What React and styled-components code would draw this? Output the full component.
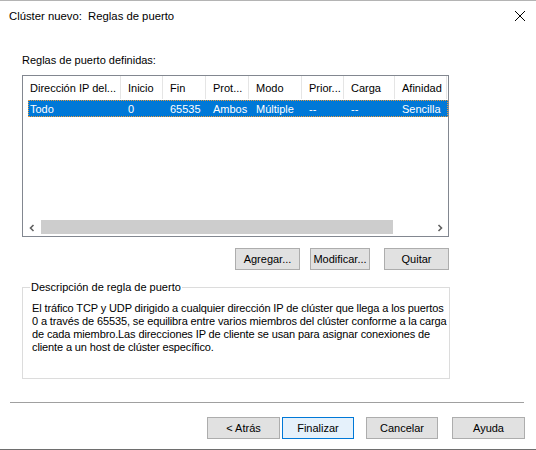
import React from "react";
import styled, { createGlobalStyle } from "styled-components";

const GlobalStyle = createGlobalStyle`
  html, body {
    margin: 0;
    padding: 0;
    background: #ffffff;
  }
  body {
    font-family: "Liberation Sans", Arial, sans-serif;
    font-size: 11px;
    color: #000000;
  }
`;

const columns = [
  { title: "Dirección IP del...", width: 98 },
  { title: "Inicio", width: 42 },
  { title: "Fin", width: 43 },
  { title: "Prot...", width: 43 },
  { title: "Modo", width: 53 },
  { title: "Prior...", width: 42 },
  { title: "Carga", width: 51 },
  { title: "Afinidad", width: 52 },
];

const rows = [["Todo", "0", "65535", "Ambos", "Múltiple", "--", "--", "Sencilla"]];

const gridCols = columns.map((c) => c.width + "px").join(" ");

const description = [
  "El tráfico TCP y UDP dirigido a cualquier dirección IP de clúster que llega a los puertos",
  "0 a través de 65535, se equilibra entre varios miembros del clúster conforme a la carga",
  "de cada miembro.Las direcciones IP de cliente se usan para asignar conexiones de",
  "cliente a un host de clúster específico.",
];

const Window = styled.div`
  width: 536px;
  height: 450px;
  box-sizing: border-box;
  border-top: 1px solid #b4b4b4;
  border-bottom: 1px solid #6e6e6e;
  display: flex;
  flex-direction: column;
  background: #ffffff;
  overflow: hidden;
`;

const TitleBar = styled.div`
  height: 29px;
  display: flex;
  align-items: center;
  justify-content: space-between;
  padding: 0 10px 0 9px;
  font-size: 11.3px;
  white-space: pre;
`;

const CloseButton = styled.div`
  width: 12px;
  height: 12px;
  display: flex;
  align-items: center;
  justify-content: center;
`;

const Body = styled.div`
  padding: 24px 87px 0 22px;
  display: flex;
  flex-direction: column;
`;

const Label = styled.div`
  line-height: 13px;
  margin-bottom: 8px;
`;

const ListBox = styled.div`
  height: 162px;
  box-sizing: border-box;
  border: 1px solid #828790;
  display: flex;
  flex-direction: column;
`;

const HeaderRow = styled.div`
  display: grid;
  grid-template-columns: ${gridCols};
  height: 23px;
`;

const HeaderCell = styled.div`
  display: flex;
  align-items: center;
  padding-left: 7px;
  border-right: 1px solid #e5e5e5;
  white-space: nowrap;
  overflow: hidden;
`;

const DataRow = styled.div`
  display: grid;
  grid-template-columns: ${gridCols};
  height: 17px;
  margin-top: 1px;
  background: ${(p) => (p.$selected ? "#0078d7" : "transparent")};
  color: ${(p) => (p.$selected ? "#ffffff" : "#000000")};
  position: relative;
  clip-path: inset(0 0 0 5px);
  &::after {
    content: "";
    position: absolute;
    inset: 0 0 0 5px;
    border: 1px dotted ${(p) => (p.$selected ? "#e89a3c" : "transparent")};
  }
`;

const DataCell = styled.div`
  display: flex;
  align-items: center;
  padding-left: 7px;
  white-space: nowrap;
  overflow: hidden;
`;

const ListFill = styled.div`
  flex: 1;
`;

const ScrollBar = styled.div`
  height: 17px;
  display: flex;
  align-items: flex-start;
  background: #ffffff;
`;

const ScrollArrow = styled.div`
  width: 17px;
  height: 17px;
  display: flex;
  align-items: center;
  justify-content: center;
`;

const ScrollTrack = styled.div`
  flex: 1;
  height: 17px;
  padding-top: 1px;
  box-sizing: border-box;
  padding-right: 38px;
`;

const Thumb = styled.div`
  height: 14px;
  background: #cdcdcd;
  margin-left: 1px;
`;

const ButtonRow = styled.div`
  display: flex;
  justify-content: flex-end;
  gap: ${(p) => p.$gap ?? 10}px;
  margin-top: ${(p) => p.$top ?? 0}px;
`;

const Button = styled.button`
  width: ${(p) => p.$width || 65}px;
  height: 22px;
  box-sizing: border-box;
  margin: 0;
  padding: 0;
  font-family: "Liberation Sans", Arial, sans-serif;
  font-size: 11px;
  color: #000000;
  background: ${(p) => (p.$default ? "#e5f1fb" : "#e1e1e1")};
  border: 1px solid ${(p) => (p.$default ? "#0078d7" : "#adadad")};
  margin-left: ${(p) => p.$ml || 0}px;
`;

const GroupBox = styled.fieldset`
  margin: 11px 0 0 0;
  padding: 8px 4px 0 9px;
  height: 98px;
  box-sizing: border-box;
  border: 1px solid #dcdcdc;
  min-width: 0;
  width: 428px;
`;

const Legend = styled.legend`
  padding: 0 1px;
  margin-left: -2px;
  line-height: 13px;
`;

const DescLine = styled.div`
  line-height: 13px;
  white-space: nowrap;
  letter-spacing: -0.12px;
`;

const Footer = styled.div`
  margin-top: auto;
  padding: 0 11px 10px 10px;
  display: flex;
  flex-direction: column;
`;

const Separator = styled.div`
  height: 1px;
  background: #a0a0a0;
  margin-right: 1px;
`;

const Chevron = ({ dir }) => (
  <svg width="6" height="8" viewBox="0 0 6 8">
    <path
      d={dir === "left" ? "M4.5 1 L1.5 4 L4.5 7" : "M1.5 1 L4.5 4 L1.5 7"}
      fill="none"
      stroke="#606060"
      strokeWidth="1.6"
    />
  </svg>
);

export default function App() {
  return (
    <>
      <GlobalStyle />
      <Window>
        <TitleBar>
          <span>Clúster nuevo:  Reglas de puerto</span>
          <CloseButton>
            <svg width="12" height="12" viewBox="0 0 12 12">
              <path d="M1 1 L11 11 M11 1 L1 11" stroke="#000" strokeWidth="1" />
            </svg>
          </CloseButton>
        </TitleBar>
        <Body>
          <Label>Reglas de puerto definidas:</Label>
          <ListBox>
            <HeaderRow>
              {columns.map((c) => (
                <HeaderCell key={c.title}>{c.title}</HeaderCell>
              ))}
            </HeaderRow>
            {rows.map((r, i) => (
              <DataRow key={i} $selected>
                {r.map((v, j) => (
                  <DataCell key={j}>{v}</DataCell>
                ))}
              </DataRow>
            ))}
            <ListFill />
            <ScrollBar>
              <ScrollArrow>
                <Chevron dir="left" />
              </ScrollArrow>
              <ScrollTrack>
                <Thumb />
              </ScrollTrack>
              <ScrollArrow>
                <Chevron dir="right" />
              </ScrollArrow>
            </ScrollBar>
          </ListBox>
          <ButtonRow $top={11} $gap={10}>
            <Button>Agregar...</Button>
            <Button $width={60}>Modificar...</Button>
            <Button $ml={4}>Quitar</Button>
          </ButtonRow>
          <GroupBox>
            <Legend>Descripción de regla de puerto</Legend>
            {description.map((l) => (
              <DescLine key={l}>{l}</DescLine>
            ))}
          </GroupBox>
        </Body>
        <Footer>
          <Separator />
          <ButtonRow $top={14} $gap={0}>
            <Button $width={73}>&lt; Atrás</Button>
            <Button $width={72} $default $ml={2}>Finalizar</Button>
            <Button $width={72} $ml={12}>Cancelar</Button>
            <Button $width={73} $ml={14}>Ayuda</Button>
          </ButtonRow>
        </Footer>
      </Window>
    </>
  );
}
